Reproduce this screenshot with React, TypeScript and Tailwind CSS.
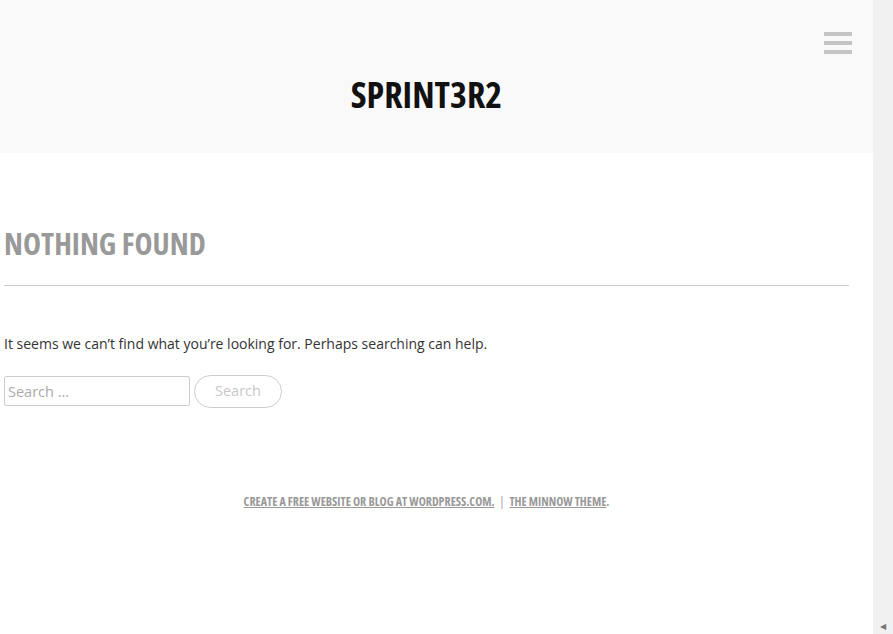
const App = () => {
  return (
    <div className="flex h-[634px] w-[893px] bg-white" style={{ fontFamily: '"Open Sans", "Liberation Sans", sans-serif' }}>
      <div className="flex w-[873px] flex-col">
        {/* Header */}
        <header className="relative flex h-[153px] items-center justify-center bg-[#f9f9f9] pr-[20px] pt-[36px]">
          <h1 className="text-[36px] font-bold uppercase leading-none text-[#111] font-stretch-condensed">
            Sprint3r2
          </h1>
          <button className="absolute right-[21px] top-[32px] flex flex-col gap-[5px]">
            <span className="block h-[4px] w-[28px] bg-[#c4c4c4]" />
            <span className="block h-[4px] w-[28px] bg-[#c4c4c4]" />
            <span className="block h-[4px] w-[28px] bg-[#c4c4c4]" />
          </button>
        </header>

        {/* Content */}
        <main className="pl-[4px] pr-[24px] pt-[75px]">
          <h2 className="text-[30.5px] font-bold uppercase leading-none text-[#999] font-stretch-condensed">
            Nothing Found
          </h2>
          <hr className="mt-[26px] border-t border-[#cccccc]" />
          <p className="mt-[47px] text-[14px] text-[#333]">
            It seems we can’t find what you’re looking for. Perhaps searching can help.
          </p>
          <form className="mt-[21px] flex items-center gap-[4px]">
            <input
              type="search"
              placeholder="Search …"
              className="h-[30px] w-[186px] rounded-[2px] border border-[#cccccc] px-[3px] text-[14.5px] text-[#333] placeholder:text-[#aaa] outline-none"
            />
            <button
              type="button"
              className="h-[33px] w-[88px] rounded-full border border-[#cccccc] bg-white text-[14.5px] text-[#c8c8c8]"
            >
              Search
            </button>
          </form>
        </main>

        {/* Footer */}
        <footer className="mt-[85px] pr-[20px] text-center text-[12px] font-bold uppercase text-[#999] font-stretch-condensed">
          <a href="#" className="underline">Create a free website or blog at WordPress.com.</a>
          <span className="mx-[5px] font-normal">|</span>
          <a href="#" className="underline">The Minnow Theme</a>.
        </footer>
      </div>

      {/* Scrollbar strip */}
      <div className="flex w-[20px] flex-col justify-end bg-[#f1f1f1]">
        <div className="flex h-[16px] items-center justify-center text-[8px] text-[#777]">◀</div>
      </div>
    </div>
  )
}

export default App
